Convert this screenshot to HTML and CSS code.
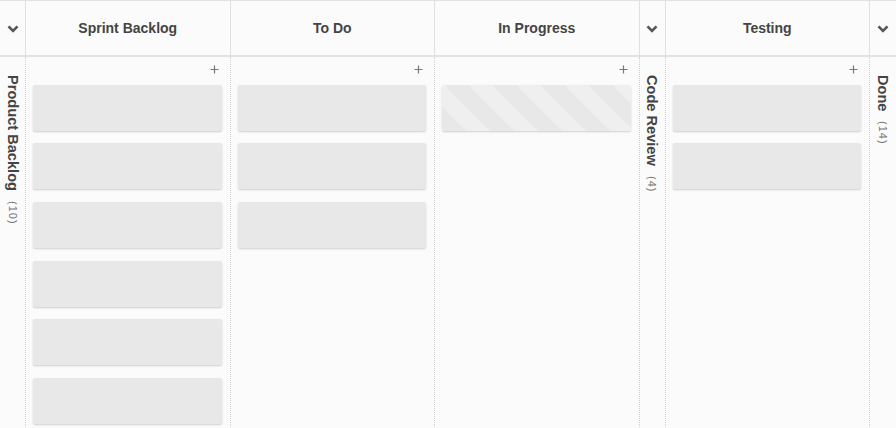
FILE: index.html
```html
<!DOCTYPE html>
<html>
<head>
<meta charset="utf-8">
<link rel="stylesheet" href="styles.css">
</head>
<body>
<div class="board">
  <div class="head collapsed-head"><svg class="chev" viewBox="0 0 12 8" width="12" height="8"><path d="M1.5 1.3 L6 5.8 L10.5 1.3" fill="none" stroke="#555" stroke-width="2.6"/></svg></div>
  <div class="head">Sprint Backlog</div>
  <div class="head">To Do</div>
  <div class="head">In Progress</div>
  <div class="head collapsed-head"><svg class="chev" viewBox="0 0 12 8" width="12" height="8"><path d="M1.5 1.3 L6 5.8 L10.5 1.3" fill="none" stroke="#555" stroke-width="2.6"/></svg></div>
  <div class="head">Testing</div>
  <div class="head collapsed-head last"><svg class="chev" viewBox="0 0 12 8" width="12" height="8"><path d="M1.5 1.3 L6 5.8 L10.5 1.3" fill="none" stroke="#555" stroke-width="2.6"/></svg></div>

  <div class="col collapsed"><span class="vt"><b>Product Backlog</b><span class="count">(10)</span></span></div>
  <div class="col">
    <div class="add"><svg viewBox="0 0 9 9" width="9" height="9"><path d="M4.5 0.5 V8.5 M0.5 4.5 H8.5" stroke="#777" stroke-width="1.2"/></svg></div>
    <div class="card"></div><div class="card"></div><div class="card"></div>
    <div class="card"></div><div class="card"></div><div class="card"></div>
  </div>
  <div class="col">
    <div class="add"><svg viewBox="0 0 9 9" width="9" height="9"><path d="M4.5 0.5 V8.5 M0.5 4.5 H8.5" stroke="#777" stroke-width="1.2"/></svg></div>
    <div class="card"></div><div class="card"></div><div class="card"></div>
  </div>
  <div class="col">
    <div class="add"><svg viewBox="0 0 9 9" width="9" height="9"><path d="M4.5 0.5 V8.5 M0.5 4.5 H8.5" stroke="#777" stroke-width="1.2"/></svg></div>
    <div class="card striped"></div>
  </div>
  <div class="col collapsed"><span class="vt"><b>Code Review</b><span class="count">(4)</span></span></div>
  <div class="col">
    <div class="add"><svg viewBox="0 0 9 9" width="9" height="9"><path d="M4.5 0.5 V8.5 M0.5 4.5 H8.5" stroke="#777" stroke-width="1.2"/></svg></div>
    <div class="card"></div><div class="card"></div>
  </div>
  <div class="col collapsed last"><span class="vt"><b>Done</b><span class="count">(14)</span></span></div>
</div>
</body>
</html>
```
FILE: styles.css
```css
html, body {
  margin: 0;
  padding: 0;
  background: #fbfbfb;
  font-family: "Liberation Sans", Arial, sans-serif;
  overflow: hidden;
}
.board {
  display: grid;
  grid-template-columns: 26px 1fr 1fr 1fr 26px 1fr 26px;
  grid-template-rows: 56px 372px;
  width: 896px;
  height: 428px;
  border-top: 1px solid #e3e3e3;
  box-sizing: border-box;
}
.head {
  display: flex;
  align-items: center;
  justify-content: center;
  border-right: 1px solid #e0e0e0;
  border-bottom: 2px solid #e3e3e3;
  font-weight: bold;
  font-size: 14px;
  color: #444;
  background: #fbfbfb;
}
.head.last, .col.last { border-right: none; }
.collapsed-head .chev { margin-top: 1px; }
.col {
  border-right: 1px dotted #cfcfcf;
  padding: 8px 8px 0 7px;
  display: flex;
  flex-direction: column;
  gap: 12.7px;
  overflow: hidden;
}
.add {
  align-self: flex-end;
  line-height: 0;
  height: 9px;
  margin-right: 3px;
  margin-bottom: -2px;
}
.card {
  height: 46px;
  flex: none;
  background: #e8e8e8;
  border-radius: 2px;
  box-shadow: 0 1px 2px rgba(0,0,0,0.18);
}
.card.striped {
  background: repeating-linear-gradient(45deg, #e8e8e8 0 17px, #efefef 17px 34px);
}
.col.collapsed {
  padding: 18px 0 0 0;
  align-items: center;
}
.vt {
  writing-mode: vertical-rl;
  display: flex;
  align-items: center;
  gap: 10px;
  font-size: 14.6px;
  color: #444;
}
.vt b { font-weight: bold; }
.count {
  font-size: 11px;
  color: #777;
  letter-spacing: 1px;
}
```
